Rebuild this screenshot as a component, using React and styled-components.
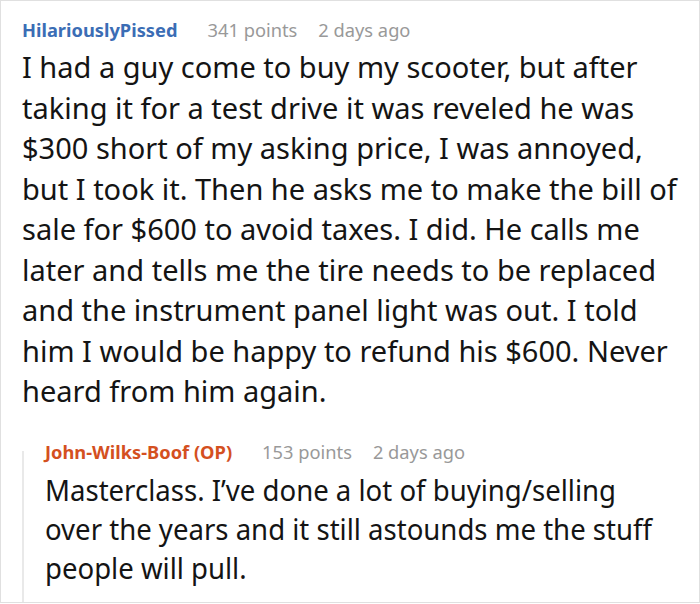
import React from "react";
import styled, { createGlobalStyle } from "styled-components";

const Global = createGlobalStyle`
  html, body { margin: 0; padding: 0; background: #fff; }
  body { font-family: "Noto Sans", "Open Sans", sans-serif; }
`;

const Card = styled.div`
  box-sizing: border-box;
  width: 700px;
  height: 603px;
  border: 1px solid #e0e0e0;
  padding: 15px 10px 0 21px;
  overflow: hidden;
`;

const Header = styled.div`
  display: flex;
  align-items: baseline;
  font-size: 18.3px;
  line-height: 28px;
`;

const Author = styled.span`
  font-weight: 700;
  color: ${(p) => p.$color};
  margin-right: 9px;
`;

const Meta = styled.span`
  color: #999;
  margin-left: 21px;
`;

const Body = styled.p`
  margin: 3px 0 0 0;
  font-size: 29px;
  line-height: 40.5px;
  color: #141414;
`;

const Reply = styled.div`
  position: relative;
  margin-top: 26px;
  padding-left: 23px;
`;

const ThreadLine = styled.span`
  position: absolute;
  left: 0;
  top: 13px;
  bottom: -28px;
  width: 2px;
  background: #e9e9e9;
`;

const ReplyBody = styled.p`
  margin: 4px 0 0 0;
  width: 655px;
  font-size: 29px;
  line-height: 39px;
  color: #141414;
  transform: scaleX(0.95);
  transform-origin: left top;
`;

const comments = {
  parent: {
    author: "HilariouslyPissed",
    color: "#3b6db5",
    points: "341 points",
    time: "2 days ago",
    text:
      "I had a guy come to buy my scooter, but after taking it for a test drive it was reveled he was $300 short of my asking price, I was annoyed, but I took it. Then he asks me to make the bill of sale for $600 to avoid taxes. I did. He calls me later and tells me the tire needs to be replaced and the instrument panel light was out. I told him I would be happy to refund his $600. Never heard from him again.",
  },
  reply: {
    author: "John-Wilks-Boof (OP)",
    color: "#d4501f",
    points: "153 points",
    time: "2 days ago",
    text:
      "Masterclass. I\u2019ve done a lot of buying/selling over the years and it still astounds me the stuff people will pull.",
  },
};

function CommentHead({ c }) {
  return (
    <Header>
      <Author $color={c.color}>{c.author}</Author>
      <Meta>{c.points}</Meta>
      <Meta>{c.time}</Meta>
    </Header>
  );
}

export default function App() {
  const { parent, reply } = comments;
  return (
    <>
      <Global />
      <Card>
        <CommentHead c={parent} />
        <Body>{parent.text}</Body>
        <Reply>
          <ThreadLine />
          <CommentHead c={reply} />
          <ReplyBody>{reply.text}</ReplyBody>
        </Reply>
      </Card>
    </>
  );
}
